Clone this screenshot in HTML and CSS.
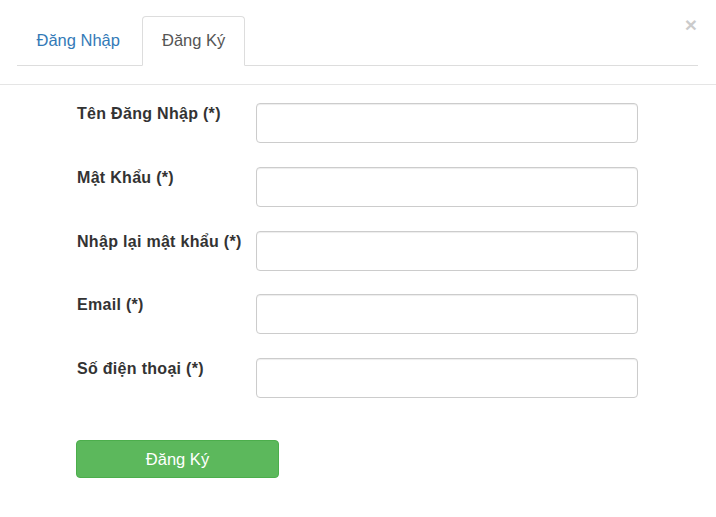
FILE: index.html
```html
<!DOCTYPE html>
<html lang="vi">
<head>
<meta charset="utf-8">
<title>Đăng Ký</title>
<link rel="stylesheet" href="styles.css">
</head>
<body>
<div class="modal">
  <div class="modal-header">
    <span class="close">×</span>
    <ul class="tabs">
      <li class="tab"><a href="#">Đăng Nhập</a></li>
      <li class="tab active"><a href="#">Đăng Ký</a></li>
    </ul>
  </div>
  <div class="modal-body">
    <form class="form">
      <label class="label">Tên Đăng Nhập (*)</label>
      <input class="input" type="text">
      <label class="label">Mật Khẩu (*)</label>
      <input class="input" type="password">
      <label class="label">Nhập lại mật khẩu (*)</label>
      <input class="input" type="password">
      <label class="label">Email (*)</label>
      <input class="input" type="text">
      <label class="label">Số điện thoại (*)</label>
      <input class="input" type="text">
    </form>
    <button class="btn-submit" type="button">Đăng Ký</button>
  </div>
</div>
</body>
</html>
```

FILE: styles.css
```css
html, body {
  margin: 0;
  padding: 0;
  background: #fff;
}
body {
  font-family: "Liberation Sans", Arial, sans-serif;
  color: #333;
}
.modal {
  width: 716px;
  height: 517px;
  background: #fff;
}
.modal-header {
  position: relative;
  padding: 16px 18px 18px 17px;
  border-bottom: 1px solid #e5e5e5;
}
.close {
  position: absolute;
  top: 14px;
  right: 19px;
  font-size: 21px;
  font-weight: bold;
  line-height: 21px;
  color: #000;
  opacity: 0.2;
}
.tabs {
  display: flex;
  list-style: none;
  margin: 0;
  padding: 0;
  border-bottom: 1px solid #ddd;
}
.tab {
  margin-bottom: -1px;
  margin-right: 3px;
  border: 1px solid transparent;
  border-radius: 4px 4px 0 0;
}
.tab a {
  display: block;
  padding: 13px 18.5px 15px;
  line-height: 20px;
  font-size: 16.5px;
  color: #337ab7;
  text-decoration: none;
}
.tab.active {
  border-color: #ddd;
  border-bottom-color: #fff;
  background: #fff;
}
.tab.active a {
  color: #555;
}
.modal-body {
  padding: 18px 0 0 77px;
}
.form {
  display: grid;
  grid-template-columns: 179px 382px;
  row-gap: 23.75px;
  margin: 0;
}
.label {
  font-weight: bold;
  font-size: 16px;
  letter-spacing: 0.3px;
  line-height: 20px;
  padding-top: 1px;
  color: #333;
}
.input {
  box-sizing: border-box;
  height: 40px;
  width: 382px;
  margin: 0;
  border: 1px solid #ccc;
  border-radius: 4px;
  box-shadow: inset 0 1px 1px rgba(0, 0, 0, 0.075);
  background: #fff;
}
.btn-submit {
  display: block;
  box-sizing: border-box;
  margin: 42px 0 0 -1px;
  width: 203px;
  height: 38px;
  padding: 0;
  background: #5cb85c;
  border: 1px solid #4cae4c;
  border-radius: 4px;
  color: #fff;
  font-family: "Liberation Sans", Arial, sans-serif;
  font-size: 16.5px;
  line-height: 20px;
}
```
